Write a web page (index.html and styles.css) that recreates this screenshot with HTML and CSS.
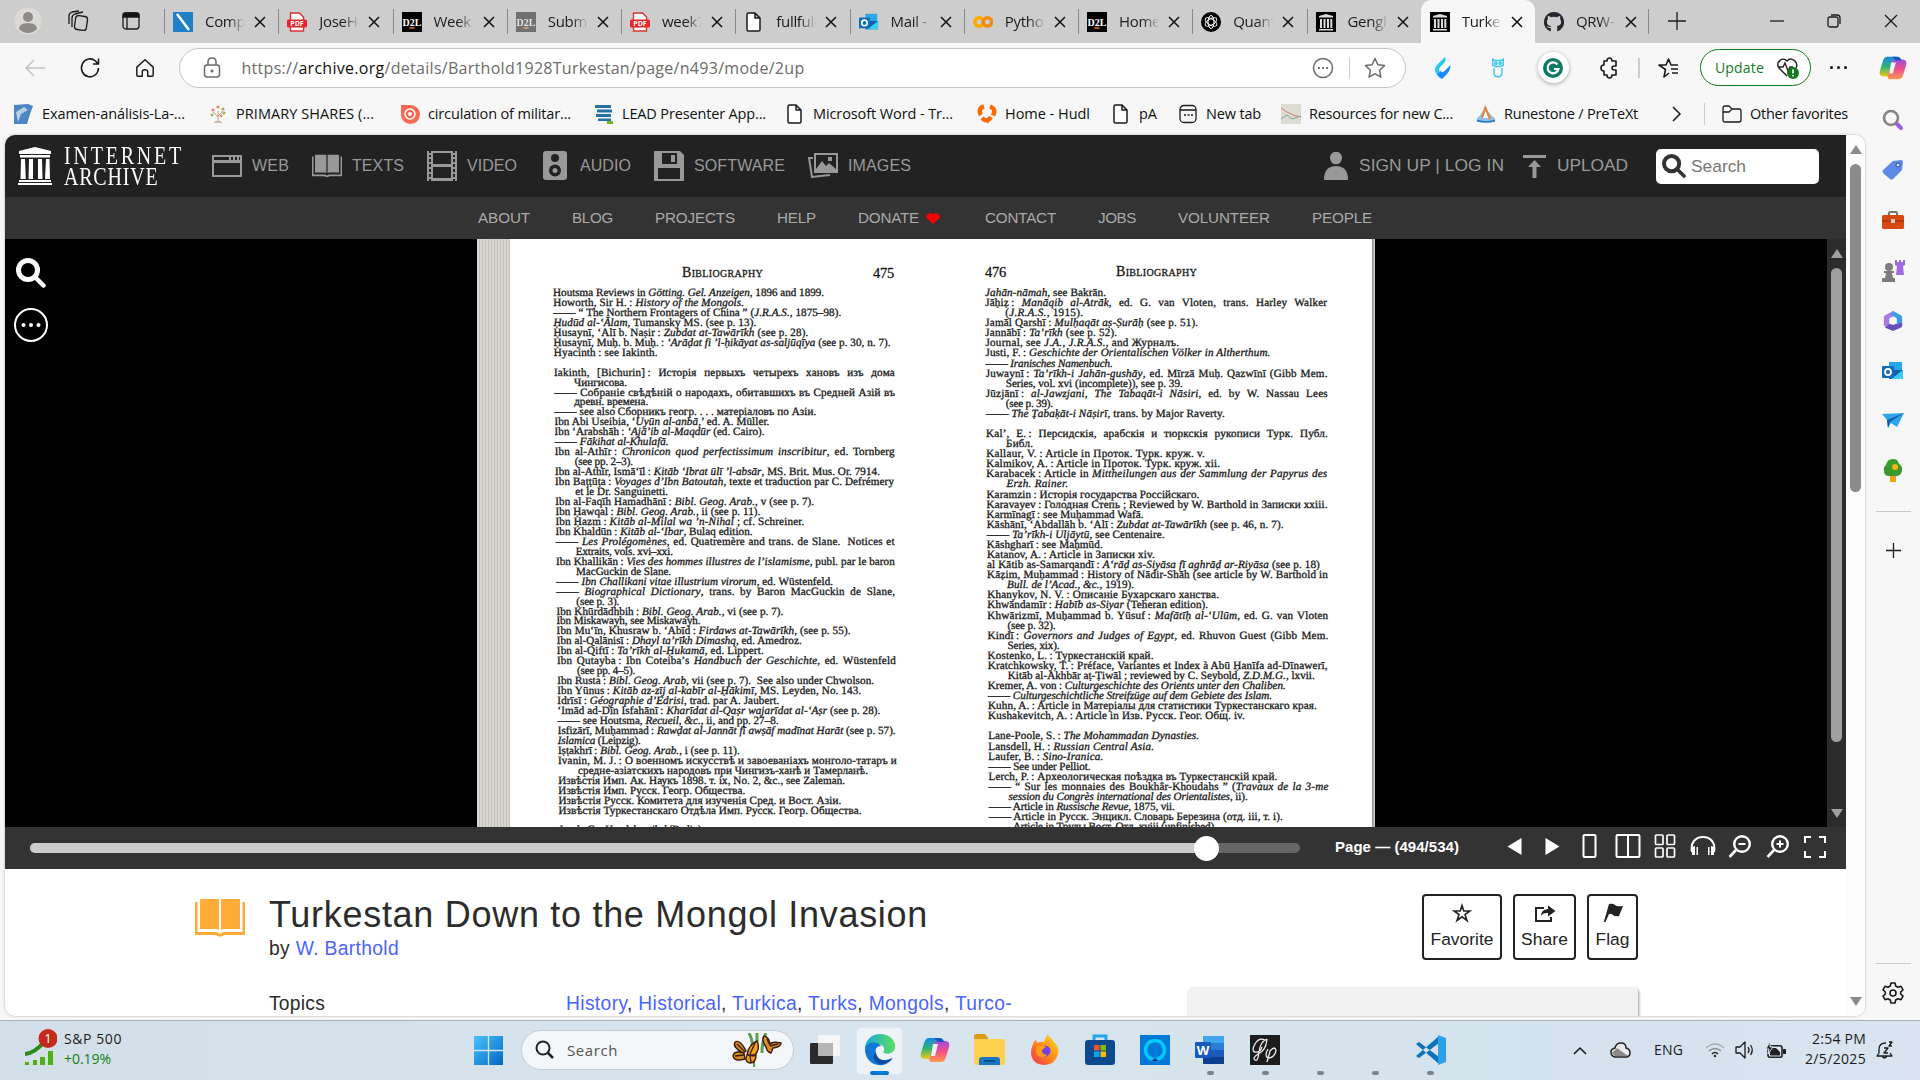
FILE: index.html
```html
<!DOCTYPE html>
<html lang="en">
<head>
<meta charset="utf-8">
<title>Turkestan Down to the Mongol Invasion : W. Barthold</title>
<link rel="stylesheet" href="styles.css">
</head>
<body>
<svg class="defs" width="0" height="0">
  <defs>
    <linearGradient id="gBlue" x1="0" y1="0" x2="1" y2="1"><stop offset="0" stop-color="#4cc2ff"/><stop offset="1" stop-color="#0067c0"/></linearGradient>
    <linearGradient id="gRain" x1="0" y1="0" x2="0" y2="1"><stop offset="0" stop-color="#1a86e8"/><stop offset=".5" stop-color="#2bb673"/><stop offset="1" stop-color="#f3c614"/></linearGradient>
    <linearGradient id="gPink" x1="0" y1="0" x2="0" y2="1"><stop offset="0" stop-color="#a44be0"/><stop offset=".5" stop-color="#ee4f86"/><stop offset="1" stop-color="#ff9a4d"/></linearGradient>
    <linearGradient id="gEdge" x1="0" y1="0" x2="1" y2="0"><stop offset="0" stop-color="#1ba6e0"/><stop offset="1" stop-color="#5be05c"/></linearGradient>
    <linearGradient id="gFox" x1="1" y1="0" x2="0" y2="1"><stop offset="0" stop-color="#ffe226"/><stop offset=".5" stop-color="#ff8a16"/><stop offset="1" stop-color="#f0305a"/></linearGradient>
  </defs>
  <symbol id="copilot" viewBox="0 0 30 30"><path fill="url(#gRain)" d="M9 3h9c2 0 3 1 2.500 3l-4 14c-1 3-2 4-5 4H5c-4 0-5-3-4-6L4 8c1-3 2-5 5-5z"/><path fill="url(#gPink)" d="M21 27h-9c-2 0-3-1-2.500-3l4-14c1-3 2-4 5-4H25c4 0 5 3 4 6l-3 10c-1 3-2 5-5 5z"/><path fill="#f3f4f6" d="M13 9h5l-3 12h-4z"/><path fill="#1956c8" d="M14 3h6c2 0 3 1 4 4h-6z"/></symbol>
  <symbol id="pdf" viewBox="0 0 20 20"><path fill="#fff" stroke="#d33" stroke-width="1.400" d="M3.500 1h9l4 4v14h-13z"/><rect x="0" y="7.500" width="20" height="8" rx="1.500" fill="#e5252a"/><text x="10" y="14" font-size="7" font-weight="bold" text-anchor="middle" fill="#fff">PDF</text></symbol>
  <symbol id="d2l" viewBox="0 0 20 20"><rect width="20" height="20"/><text x="10" y="14" font-family="Liberation Serif" font-size="10" font-weight="bold" text-anchor="middle" fill="#fff">D2L</text><rect x="7.500" y="15.200" width="5" height="1.500" fill="#e8731a"/></symbol>
  <symbol id="doc" viewBox="0 0 20 20"><path fill="#fff" stroke="#1b1b1b" stroke-width="1.500" stroke-linejoin="round" d="M4.500 1H11l5 5v11.500q0 1.500-1.500 1.500h-10Q3 19 3 17.500v-15Q3 1 4.500 1zM11 1v5h5"/></symbol>
  <symbol id="temple" viewBox="0 0 34 38"><path d="M17 0 33 4v3H1V4zM2 8h30v2.500H2zM3 12h4l.8 20H2.500zM11 12h4v20h-4.500zM20 12h4l.5 20H20zM28 12h3.500l.5 20h-5zM1 33h32v2H1zM0 36h34v2H0z"/></symbol>
  <symbol id="iaTab" viewBox="0 0 20 20"><rect width="20" height="20"/><path fill="#ddd" d="M10 2 17 4v1.500H3V4zM4 7h2v9H4zM7.500 7h2v9h-2zM11 7h2v9h-2zM14.300 7h2v9h-2zM3 17h14v1.500H3z"/></symbol>
  <symbol id="outlook" viewBox="0 0 22 20"><path fill="#28a8ea" d="M7 1h13v10H7z"/><path fill="#0f5ea8" d="M7 9h14v9H7z"/><path fill="#3ccbf4" d="M21 9v9H9z"/><rect y="5" width="12" height="12" rx="1" fill="#0f6cbd"/><circle cx="6" cy="11" r="3" fill="none" stroke="#fff" stroke-width="1.800"/></symbol>
  <symbol id="x" viewBox="0 0 12 12"><path stroke="#111" stroke-width="1.500" d="m1 1 10 10M11 1 1 11"/></symbol>
  <symbol id="book" viewBox="0 0 50 38"><path d="M6 0h17q1 0 1 1v30q-1-1-3-1H5V1q0-1 1-1zM27 0h17q1 0 1 1v29H29q-2 0-3 1V1q0-1 1-1z"/><path d="M0 3h2.500v30H21q2 0 4 2 2-2 4-2h18.500V3H50v33H30q-2 0-3 1.500h-4q-1-1.500-3-1.500H0z"/></symbol>
  <symbol id="lens" viewBox="0 0 30 30"><circle cx="12" cy="12" r="9.500" fill="none" stroke="currentColor" stroke-width="5"/><path d="m19 19 8.500 8.500" stroke="currentColor" stroke-width="4.500" stroke-linecap="round"/></symbol>
</svg>

<header class="tabstrip">
  <div class="strip-tools">
    <svg width="28" height="28" viewBox="0 0 28 28"><circle cx="14" cy="14" r="13.500" fill="#dcdad6"/><circle cx="14" cy="10" r="5" fill="#8d8a87"/><path fill="#8d8a87" d="M5 22q0-6 9-6t9 6q-4 4-9 4t-9-4z"/></svg>
    <svg width="22" height="22" viewBox="0 0 22 22" class="ln"><rect x="8" y="6" width="12" height="14" rx="3" transform="rotate(8 14 13)"/><path d="M5 17V8q0-3 3-4l8-2M2 14V6q0-3 3-4l7-1"/></svg>
    <svg width="20" height="20" viewBox="0 0 20 20" class="ln"><rect x="2" y="2" width="16" height="16" rx="3"/><path fill="#111" d="M2 6V4q0-2 2-2h12q2 0 2 2v2zM6 6v12"/></svg>
  </div>
  <div class="tab"><svg class="fav"><rect width="20" height="20" fill="#1d80c9"/><path d="M4 2l12 16" stroke="#fff" stroke-width="2.500"/></svg><span class="tt">Compu</span><svg class="cx"><use href="#x"/></svg></div>
  <div class="tab"><svg class="fav"><use href="#pdf"/></svg><span class="tt">JoseHe</span><svg class="cx"><use href="#x"/></svg></div>
  <div class="tab"><svg class="fav"><use href="#d2l"/></svg><span class="tt">Week</span><svg class="cx"><use href="#x"/></svg></div>
  <div class="tab"><svg class="fav dim"><use href="#d2l"/></svg><span class="tt">Submi</span><svg class="cx"><use href="#x"/></svg></div>
  <div class="tab"><svg class="fav"><use href="#pdf"/></svg><span class="tt">week7</span><svg class="cx"><use href="#x"/></svg></div>
  <div class="tab"><svg class="fav"><use href="#doc"/></svg><span class="tt">fullfull</span><svg class="cx"><use href="#x"/></svg></div>
  <div class="tab"><svg class="fav"><use href="#outlook"/></svg><span class="tt">Mail -</span><svg class="cx"><use href="#x"/></svg></div>
  <div class="tab"><svg class="fav" viewBox="0 0 20 20" fill="none" stroke-width="3.500"><circle cx="6" cy="10" r="4.200" stroke="#f9ab00"/><circle cx="14.500" cy="10" r="4.200" stroke="#f28b10"/></svg><span class="tt">Python</span><svg class="cx"><use href="#x"/></svg></div>
  <div class="tab"><svg class="fav"><use href="#d2l"/></svg><span class="tt">Home</span><svg class="cx"><use href="#x"/></svg></div>
  <div class="tab"><svg class="fav" viewBox="0 0 20 20"><circle cx="10" cy="10" r="10"/><g fill="none" stroke="#fff"><ellipse cx="10" cy="10" rx="3" ry="6.500"/><ellipse cx="10" cy="10" rx="3" ry="6.500" transform="rotate(60 10 10)"/><ellipse cx="10" cy="10" rx="3" ry="6.500" transform="rotate(120 10 10)"/></g></svg><span class="tt">Quant</span><svg class="cx"><use href="#x"/></svg></div>
  <div class="tab"><svg class="fav"><use href="#iaTab"/></svg><span class="tt">Gengh</span><svg class="cx"><use href="#x"/></svg></div>
  <div class="tab on"><svg class="fav"><use href="#iaTab"/></svg><span class="tt">Turkes</span><svg class="cx"><use href="#x"/></svg></div>
  <div class="tab nosep"><svg class="fav" viewBox="0 0 20 20"><path fill="#24292f" d="M10 0a10 10 0 0 0-3.200 19.500V16c-3 .6-3.500-1.500-4-2 2 0 2 1.500 4 1v-1C2.500 13.500 2 9 4 7c-.5-1-.3-2 0-3 1 0 2 .5 3 1.200q3-.8 6 0c1-.7 2-1.200 3-1.200.3 1 .5 2 0 3 2 2 1.500 6.500-2.800 7v5.500A10 10 0 0 0 10 0z"/></svg><span class="tt">QRW-</span><svg class="cx"><use href="#x"/></svg></div>
  <div class="newtab"><svg width="18" height="18" class="ln"><path d="M9 0v18M0 9h18"/></svg></div>
  <div class="winbtns">
    <svg width="14" height="14" class="ln"><path d="M0 7h14"/></svg>
    <svg width="14" height="14" class="ln"><rect x="1" y="3" width="10" height="10" rx="2"/><path d="M4 1h6q3 0 3 3v6"/></svg>
    <svg width="14" height="14" class="ln"><path d="m1 1 12 12M13 1 1 13"/></svg>
  </div>
</header>

<div class="shell">
<div class="main">
  <div class="toolbar">
    <div class="navbtn"><svg width="22" height="20" viewBox="0 0 22 20" class="ln pale"><path d="M21 10H2M10 2l-8 8 8 8"/></svg></div>
    <div class="navbtn"><svg width="22" height="22" viewBox="0 0 22 22" class="ln mid"><path d="M19.500 11a8.500 9 0 1 1-3-7l2.500 3M19.500 1.500V7H14"/></svg></div>
    <div class="navbtn"><svg width="20" height="22" viewBox="0 0 22 22" class="ln mid"><path d="M2 10 11 2l9 8v9q0 1-1 1h-5v-5q0-2-3-2t-3 2v5H3q-1 0-1-1z"/></svg></div>
    <div class="address">
      <svg width="18" height="22" viewBox="0 0 18 22" class="ln grey"><rect x="1.500" y="8" width="15" height="12" rx="2.500"/><path d="M5 8V5q0-4 4-4t4 4v3"/><circle cx="9" cy="14" r=".8"/></svg>
      <span class="url" data-w="563">https://<b>archive.org</b>/details/Barthold1928Turkestan/page/n493/mode/2up</span>
      <svg width="22" height="22" viewBox="0 0 22 22" class="ln grey"><circle cx="11" cy="11" r="9.500"/><path stroke-width="2" d="M6 11h1.800M10.100 11h1.800M14.200 11H16"/></svg>
      <i class="vr"></i>
      <svg width="22" height="22" viewBox="0 0 22 22" class="ln grey"><path d="m11 1.500 2.900 6.300 6.600.8-4.900 4.700 1.300 6.800L11 16.700l-5.900 3.400 1.300-6.800L1.500 8.600l6.600-.8z"/></svg>
    </div>
    <div class="ext"><svg width="18" height="22" viewBox="0 0 18 22"><path fill="#1b8cff" d="M16.500 8q0 5-3.500 9l-5 5q-4-2-5.500-5l5-4 2 2z"/><path fill="#25c8ef" d="M11 0q1.500 3-.5 5.500L6 10q-2 3 0 5l-3.500 2Q-1 12 3 8z"/><path fill="#fff" d="m6.500 14 7-6 .5 1-6 6.500z"/></svg></div>
    <div class="ext"><svg width="14" height="22" viewBox="0 0 16 22" fill="none" stroke="#38c5f0" stroke-width="1.600"><path d="M2 1l3 1.500h6L14 1v7q-3 2-6 1-3 1-6-1zM3.500 11v6q0 4 4.500 4t4.500-4v-6"/><circle cx="5.500" cy="5.500" r="1.300"/><circle cx="10.500" cy="5.500" r="1.300"/></svg></div>
    <div class="ext"><span class="gram"><svg width="20" height="20" viewBox="0 0 20 20"><circle cx="10" cy="10" r="10" fill="#0e7a66"/><path fill="none" stroke="#fff" stroke-width="2.200" d="M14.500 6.500a5.500 5.500 0 1 0 1 4.500H11"/></svg></span></div>
    <div class="ext"><svg width="20" height="22" viewBox="0 0 20 22" class="ln mid"><path d="M5 4h3q0-3 2.500-3T13 4h4v5h-1.500q-2.500 0-2.500 2t2.500 2H17v5h-4q0 3-2.500 3T8 18H5v-4q-3 0-3-3t3-3z"/></svg></div>
    <i class="vr thick"></i>
    <div class="ext"><svg width="22" height="22" viewBox="0 0 22 22" class="ln mid"><path d="m12 16-5 4 1.500-7.500L2 8h7l2.500-6L14 8h7M14 12h7M15 16h6"/></svg></div>
    <div class="update"><span data-w="49">Update</span><svg width="24" height="24" viewBox="0 0 24 24"><path fill="none" stroke="#222" stroke-width="1.400" d="M11 20 3 12C-1 6 7 0 11 5c4-5 12 1 9 7M2 11h5l2-4 3 8 2-4h3"/><circle cx="17" cy="17" r="6" fill="#15791f"/><path stroke="#fff" stroke-width="1.600" d="M17 13.500v4M17 19v1.500"/></svg></div>
    <div class="ext"><svg width="17" height="3"><g fill="#111"><circle cx="1.500" cy="1.500" r="1.500"/><circle cx="8.500" cy="1.500" r="1.500"/><circle cx="15.500" cy="1.500" r="1.500"/></g></svg></div>
  </div>

  <nav class="favs">
    <a><svg class="fi" viewBox="0 0 20 20"><path fill="#4c86c6" d="M0 1l14-1 5 2-3 8-3 10H0z"/><path fill="#b7d0e6" d="M2 8l8-5 4 3-7 4-3 8z"/></svg><span data-w="143">Examen-análisis-La-...</span></a>
    <a><svg class="fi" viewBox="0 0 20 20"><path stroke="#c09a75" fill="none" d="M10 18V7M10 13 5 8M10 12l5-5"/><g fill="#e0887c"><circle cx="5" cy="6" r="1.600"/><circle cx="10" cy="3" r="1.600"/><circle cx="13" cy="12" r="1.300"/></g><g fill="#9ab25a"><circle cx="15" cy="5" r="1.600"/><circle cx="4" cy="11" r="1.400"/><circle cx="16" cy="9" r="1.500"/></g><path fill="#cba" d="M6 18q4-3 8 0v1H6z"/></svg><span data-w="138">PRIMARY SHARES (...</span></a>
    <a><svg class="fi" viewBox="0 0 20 20"><path fill="#f96854" d="M1 1h9a9.500 9.500 0 1 1-9 9z"/><circle cx="10" cy="10" r="5" fill="none" stroke="#fff" stroke-width="1.500"/><circle cx="10" cy="10" r="2" fill="#fff"/></svg><span data-w="143">circulation of militar...</span></a>
    <a><svg class="fi" viewBox="0 0 20 20"><path fill="#2471a3" d="M1 1h16v3H1zM3 5.500h15v3H3zM2 10h15v3H2zM4 14.500h13v2.500H4z"/><path fill="#7ab51d" d="M13 17h6v3h-6z"/></svg><span data-w="144">LEAD Presenter App...</span></a>
    <a><svg class="fi"><use href="#doc"/></svg><span data-w="140">Microsoft Word - Tr...</span></a>
    <a><svg class="fi" viewBox="0 0 20 20"><path fill="none" stroke="#ff6a00" stroke-width="4.500" d="M7 2.500C2 4 2 8 4 11M13 2.500c5 2 5 5 3 9M5 14q5 5 9-1"/><path fill="#ff6a00" d="M8 14h5l-2 6z"/></svg><span data-w="85">Home - Hudl</span></a>
    <a><svg class="fi"><use href="#doc"/></svg><span data-w="18">pA</span></a>
    <a><svg class="fi ln" viewBox="0 0 20 20"><rect x="2" y="1.500" width="16" height="17" rx="4"/><path d="M2 6h16M6 11h2M9.500 11h2M13 11h2"/></svg><span data-w="55">New tab</span></a>
    <a><svg class="fi" viewBox="0 0 20 20"><rect width="20" height="20" fill="#dcdcd2"/><path fill="none" stroke="#d77" d="M0 4l6 4 6 3 8 2"/><path fill="none" stroke="#7aa89a" d="M0 15l6-4 5 4 9-3"/></svg><span data-w="144">Resources for new C...</span></a>
    <a><svg class="fi" viewBox="0 0 20 20"><path fill="#8ec1ea" d="M1 14q5-3 8-13 4 10 10 13v4H1z"/><path fill="#fff" d="M6 14 9.500 5 13 14z"/><path fill="none" stroke="#f08030" stroke-width="2" d="M6 14 9.500 4 14 15"/><path fill="none" stroke="#1e78c8" stroke-width="1.500" d="M1 16.500q9 3 18 0"/></svg><span data-w="134">Runestone / PreTeXt</span></a>
    <div class="more"><svg width="9" height="16" class="ln mid"><path d="m1 1 7 7-7 7"/></svg></div>
    <i class="vr"></i>
    <a class="other"><svg class="fi ln" viewBox="0 0 20 20"><path d="M1 4q0-2 2-2h4l3 3h7q2 0 2 2v9q0 2-2 2H3q-2 0-2-2zM1 8h6l3-3"/></svg><span data-w="98">Other favorites</span></a>
  </nav>

  <div class="page">
    <div class="doc">
      <div class="ia-top">
        <svg class="logo" width="34" height="38"><use href="#temple"/></svg>
        <div class="wordmark"><span data-w="150">INTERNET</span><span data-w="118">ARCHIVE</span></div>
        <a><svg width="30" height="30" viewBox="0 0 30 30"><path fill-rule="evenodd" d="M0 4h30v22H0zM2 6v3h15V6zM19 6v3h2V6zM23 6v3h2V6zM27 6v3h1V6zM2 12v12h26V12z"/></svg><span data-w="37">WEB</span></a>
        <a><svg width="30" height="30" viewBox="0 -4 50 46"><use href="#book" width="50" height="38"/></svg><span data-w="52">TEXTS</span></a>
        <a><svg width="30" height="30" viewBox="0 0 30 30"><path fill-rule="evenodd" d="M0 0h2v2h2V0h22v2h2V0h2v30h-2v-2h-2v2H4v-2H2v2H0zM2 4v2h2V4zM2 8v3h2V8zM2 13v3h2v-3zM2 18v3h2v-3zM2 23v3h2v-3zM26 4v2h2V4zM26 8v3h2V8zM26 13v3h2v-3zM26 18v3h2v-3zM26 23v3h2v-3zM6 2v11h18V2zM6 16v11h18V16z"/></svg><span data-w="50">VIDEO</span></a>
        <a><svg width="30" height="30" viewBox="0 0 30 30"><rect x="3" y="0" width="24" height="29" rx="3"/><g fill="#222"><circle cx="15" cy="7" r="4"/><circle cx="15" cy="19.500" r="6"/></g><circle cx="15" cy="19.500" r="2.500"/></svg><span data-w="51">AUDIO</span></a>
        <a><svg width="30" height="30" viewBox="0 0 30 30"><path fill-rule="evenodd" d="M0 0h26l4 4v26H0zM8 2v11h15V2zM17 4h4v7h-4zM4 17v11h22V17z"/></svg><span data-w="91">SOFTWARE</span></a>
        <a><svg width="30" height="30" viewBox="0 0 30 30"><path fill-rule="evenodd" d="M6 2h24v20H6zM8 4v14l6-8 4 5 3-3 7 6V4zM20 6h4v4h-4z"/><path fill="none" stroke="#999" stroke-width="2" d="M5 7H1l3 19 18-2"/></svg><span data-w="63">IMAGES</span></a>
        <div class="ia-right">
          <svg width="24" height="28" viewBox="0 0 24 28"><ellipse cx="12" cy="6" rx="6" ry="6.300"/><path d="M0 28q0-14 12-14t12 14z"/></svg><span data-w="145">SIGN UP | LOG IN</span>
          <svg class="upl" width="23" height="23" viewBox="0 0 23 23"><path d="M0 0h23v3H0zM11.500 5 18 12h-4.500v11h-4V12H5z"/></svg><span data-w="71">UPLOAD</span>
          <div class="search"><svg width="24" height="24"><use href="#lens"/></svg><span data-w="55">Search</span></div>
        </div>
      </div>
      <div class="ia-sub">
        <a data-w="52">ABOUT</a><a data-w="41">BLOG</a><a data-w="80">PROJECTS</a><a data-w="39">HELP</a><span class="donate"><a data-w="61">DONATE</a><svg width="14" height="11" viewBox="0 0 14 11"><path fill="red" d="M7 11 1 5.500C-1.500 2 3.500-2 7 1.500 10.500-2 15.500 2 13 5.500z"/></svg></span><a data-w="71">CONTACT</a><a data-w="38">JOBS</a><a data-w="92">VOLUNTEER</a><a data-w="60">PEOPLE</a>
      </div>
      <div class="reader">
        <div class="rtools">
          <svg width="30" height="30"><use href="#lens"/></svg>
          <svg width="34" height="34" viewBox="0 0 34 34"><circle cx="17" cy="17" r="16" fill="none" stroke="#fff" stroke-width="2"/><g fill="#fff"><circle cx="9.500" cy="17" r="2"/><circle cx="17" cy="17" r="2"/><circle cx="24.500" cy="17" r="2"/></g></svg>
        </div>
        <div class="edge"></div>
        <div class="spread">
          <section class="leaf left">
            <div class="head"><span class="sc" data-w="81">Bibliography</span><span class="pn" data-w="21">475</span></div>
            <div class="lines">
              <p data-w="271">Houtsma Reviews in <i>Götting. Gel. Anzeigen</i>, 1896 and 1899.</p>
              <p data-w="191">Howorth, Sir H. : <i>History of the Mongols.</i></p>
              <p data-w="288">—— “ The Northern Frontagers of China ” (<i>J.R.A.S.</i>, 1875–98).</p>
              <p data-w="203"><i>Ḥudūd al-‘Ālam</i>, Tumansky MS. (see p. 13).</p>
              <p data-w="255">Ḥusaynī, ‘Alī b. Naṣir : <i>Zubdat at-Tawārīkh</i> (see p. 28).</p>
              <p data-w="337">Ḥusaynī, Muḥ. b. Muḥ. : <i>‘Arāḍat fi ’l-ḥikāyat as-saljūqīya</i> (see p. 30, n. 7).</p>
              <p data-w="104">Hyacinth : see Iakinth.</p>
              <p>&nbsp;</p>
              <p class="j" data-w="341">Iakinth, [Bichurin] : Исторія первыхъ четырехъ хановъ изъ дома</p>
              <p class="in" data-w="53">Чингисова.</p>
              <p class="j" data-w="341">—— Собраніе свѣдѣній о народахъ, обитавшихъ въ Средней Азій въ</p>
              <p class="in" data-w="74">древн. времена.</p>
              <p data-w="262">—— see also Сборникъ геогр. . . . матеріаловъ по Азіи.</p>
              <p data-w="215">Ibn Abi Useibia, ‘<i>Uyūn al-anbā</i>,’ ed. A. Müller.</p>
              <p data-w="210">Ibn ‘Arabshāh : <i>‘Ajā’ib al-Maqdūr</i> (ed. Cairo).</p>
              <p data-w="114">—— <i>Fākihat al-Khulafā.</i></p>
              <p class="j" data-w="340">Ibn al-Athīr : <i>Chronicon quod perfectissimum inscribitur</i>, ed. Tornberg</p>
              <p class="in" data-w="58">(see pp. 2–3).</p>
              <p data-w="325">Ibn al-Athīr, Ismā‘īl : <i>Kitāb ‘Ibrat ūlī ’l-absār</i>, MS. Brit. Mus. Or. 7914.</p>
              <p class="j" data-w="339">Ibn Baṭṭūṭa : <i>Voyages d’Ibn Batoutah</i>, texte et traduction par C. Defrémery</p>
              <p class="in" data-w="93">et le Dr. Sanguinetti.</p>
              <p data-w="259">Ibn al-Faqīh Hamadhānī : <i>Bibl. Geog. Arab.</i>, v (see p. 7).</p>
              <p data-w="205">Ibn Ḥawqal : <i>Bibl. Geog. Arab.</i>, ii (see p. 11).</p>
              <p data-w="249">Ibn Ḥazm : <i>Kitāb al-Milal wa ’n-Nihal</i> ; cf. Schreiner.</p>
              <p data-w="197">Ibn Khaldūn : <i>Kitāb al-‘Ibar</i>, Bulaq edition.</p>
              <p class="j" data-w="339">—— <i>Les Prolégomènes</i>, ed. Quatremère and trans. de Slane. &nbsp;Notices et</p>
              <p class="in" data-w="97">Extraits, vols. xvi–xxi.</p>
              <p class="j" data-w="339">Ibn Khallikān : <i>Vies des hommes illustres de l’islamisme</i>, publ. par le baron</p>
              <p class="in" data-w="95">MacGuckin de Slane.</p>
              <p data-w="277">—— <i>Ibn Challikani vitae illustrium virorum</i>, ed. Wüstenfeld.</p>
              <p class="j" data-w="339">—— <i>Biographical Dictionary</i>, trans. by Baron MacGuckin de Slane,</p>
              <p class="in" data-w="43">(see p. 3).</p>
              <p data-w="227">Ibn Khūrdādhbih : <i>Bibl. Geog. Arab.</i>, vi (see p. 7).</p>
              <p data-w="144">Ibn Miskawayh, see Miskawayh.</p>
              <p data-w="294">Ibn Mu‘īn, Khusraw b. ‘Abīd : <i>Firdaws at-Tawārīkh</i>, (see p. 55).</p>
              <p data-w="245">Ibn al-Qalānisī : <i>Dhayl ta’rīkh Dimashq</i>, ed. Amedroz.</p>
              <p data-w="207">Ibn al-Qiftī : <i>Ta’rīkh al-Ḥukamā</i>, ed. Lippert.</p>
              <p class="j" data-w="339">Ibn Qutayba : Ibn Coteiba’s <i>Handbuch der Geschichte</i>, ed. Wüstenfeld</p>
              <p class="in" data-w="58">(see pp. 4–5).</p>
              <p data-w="317">Ibn Rusta : <i>Bibl. Geog. Arab</i>, vii (see p. 7). &nbsp;See also under Chwolson.</p>
              <p data-w="304">Ibn Yūnus : <i>Kitāb az-zīj al-kabīr al-Ḥākimī</i>, MS. Leyden, No. 143.</p>
              <p data-w="222">Idrīsī : <i>Géographie d’Edrisi</i>, trad. par A. Jaubert.</p>
              <p data-w="323">‘Imād ad-Dīn Isfahānī : <i>Kharīdat al-Qaṣr wajarīdat al-‘Aṣr</i> (see p. 28).</p>
              <p data-w="221">—— see Houtsma, <i>Recueil</i>, <i>&amp;c.</i>, ii, and pp. 27–8.</p>
              <p data-w="338">Isfizārī, Muḥammad : <i>Rawḍat al-Jannāt fī awṣāf madīnat Harāt</i> (see p. 57).</p>
              <p data-w="83"><i>Islamica</i> (Leipzig).</p>
              <p data-w="182">Iṣṭakhrī : <i>Bibl. Geog. Arab.</i>, i (see p. 11).</p>
              <p class="j" data-w="339">Ivanin, M. J. : О военномъ искусствѣ и завоеваніахъ монголо-татаръ и</p>
              <p class="in" data-w="290">средне-азіатскихъ народовъ при Чингизъ-ханѣ и Тамерланѣ.</p>
              <p data-w="287">Извѣстія Имп. Ак. Наукъ 1898. т. ix, No. 2, &amp;c., see Zaleman.</p>
              <p data-w="187">Извѣстія Имп. Русск. Геогр. Общества.</p>
              <p data-w="283">Извѣстія Русск. Комитета для изученія Сред. и Вост. Азіи.</p>
              <p data-w="303">Извѣстія Туркестанскаго Отдѣла Имп. Русск. Геогр. Общества.</p>
              <p>&nbsp;</p>
              <p data-w="145">Jacob, G. : <i>Handelsartikel</i> (Berlin).</p>
            </div>
          </section>
          <section class="leaf right">
            <div class="head"><span class="pn" data-w="21">476</span><span class="sc" data-w="81">Bibliography</span></div>
            <div class="lines">
              <p data-w="121"><i>Jahān-nāmah</i>, see Bakrān.</p>
              <p class="j" data-w="342">Jāḥiẓ : <i>Manāqib al-Atrāk</i>, ed. G. van Vloten, trans. Harley Walker</p>
              <p class="in" data-w="78">(<i>J.R.A.S.</i>, 1915).</p>
              <p data-w="213">Jamāl Qarshī : <i>Mulḥaqāt aṣ-Ṣurāḥ</i> (see p. 51).</p>
              <p data-w="132">Jannābī : <i>Ta’rīkh</i> (see p. 52).</p>
              <p data-w="194">Journal, see <i>J.A.</i>, <i>J.R.A.S.</i>, and Журналъ.</p>
              <p data-w="285">Justi, F. : <i>Geschichte der Orientalischen Völker in Altherthum.</i></p>
              <p data-w="127">—— <i>Iranisches Namenbuch.</i></p>
              <p class="j" data-w="342">Juwaynī : <i>Ta’rīkh-i Jahān-gushāy</i>, ed. Mīrzā Muḥ. Qazwīnī (Gibb Mem.</p>
              <p class="in" data-w="177">Series, vol. xvi (incomplete)), see p. 39.</p>
              <p class="j" data-w="342">Jūzjānī : <i>al-Jawzjani, The Tabaqāt-i Nāsiri</i>, ed. by W. Nassau Lees</p>
              <p class="in" data-w="47">(see p. 39).</p>
              <p data-w="239">—— <i>The Ṭabaḳāt-i Nāṣirī</i>, trans. by Major Raverty.</p>
              <p>&nbsp;</p>
              <p class="j" data-w="342">Kal’, E. : Персидскія, арабскія и тюркскія рукописи Турк. Публ.</p>
              <p class="in" data-w="27">Библ.</p>
              <p data-w="219">Kallaur, V. : Article in Проток. Турк. круж. v.</p>
              <p data-w="234">Kalmikov, A. : Article in Проток. Турк. круж. xii.</p>
              <p class="j" data-w="341">Karabacek : Article in <i>Mittheilungen aus der Sammlung der Papyrus des</i></p>
              <p class="in" data-w="62"><i>Erzh. Rainer.</i></p>
              <p data-w="213">Karamzin : Исторія государства Россійскаго.</p>
              <p data-w="341">Karavayev : Голодная Степь ; Reviewed by W. Barthold in Записки xxiii.</p>
              <p data-w="157">Karmīnagī : see Muḥammad Wafā.</p>
              <p data-w="297">Kāshānī, ‘Abdallāh b. ‘Alī : <i>Zubdat at-Tawārīkh</i> (see p. 46, n. 7).</p>
              <p data-w="178">—— <i>Ta’rīkh-i Uljāytū</i>, see Centenaire.</p>
              <p data-w="116">Kāshgharī : see Maḥmūd.</p>
              <p data-w="168">Katanov, A. : Article in Записки xiv.</p>
              <p data-w="333">al Kātib as-Samarqandī : <i>A‘rāḍ as-Siyāsa fī aghrāḍ ar-Riyāsa</i> (see p. 18)</p>
              <p class="j" data-w="341">Kāẓim, Muḥammad : History of Nādir-Shāh (see article by W. Barthold in</p>
              <p class="in" data-w="127"><i>Bull. de l’Acad.</i>, <i>&amp;c.</i>, 1919).</p>
              <p data-w="232">Khanykov, N. V. : Описаніе Бухарскаго ханства.</p>
              <p data-w="221">Khwāndamīr : <i>Habīb as-Siyar</i> (Teheran edition).</p>
              <p class="j" data-w="341">Khwārizmī, Muḥammad b. Yūsuf : <i>Mafātīḥ al-‘Ulūm</i>, ed. G. van Vloten</p>
              <p class="in" data-w="48">(see p. 32).</p>
              <p class="j" data-w="341">Kindī : <i>Governors and Judges of Egypt</i>, ed. Rhuvon Guest (Gibb Mem.</p>
              <p class="in" data-w="52">Series, xix).</p>
              <p data-w="166">Kostenko, L. : Туркестанскій край.</p>
              <p class="j" data-w="340">Kratchkowsky, T. : Préface, Variantes et Index à Abū Ḥanīfa ad-Dīnawerī,</p>
              <p class="in" data-w="307">Kitāb al-Akhbār aṭ-Ṭiwāl ; reviewed by C. Seybold, <i>Z.D.M.G.</i>, lxvii.</p>
              <p data-w="298">Kremer, A. von : <i>Culturgeschichte des Orients unter den Chaliben.</i></p>
              <p data-w="284">—— <i>Culturgeschichtliche Streifzüge auf dem Gebiete des Islam.</i></p>
              <p data-w="329">Kuhn, A. : Article in Матеріалы для статистики Туркестанскаго края.</p>
              <p data-w="257">Kushakevitch, A. : Article in Изв. Русск. Геог. Общ. iv.</p>
              <p>&nbsp;</p>
              <p data-w="211">Lane-Poole, S. : <i>The Mohammadan Dynasties.</i></p>
              <p data-w="166">Lansdell, H. : <i>Russian Central Asia.</i></p>
              <p data-w="115">Laufer, B. : <i>Sino-Iranica.</i></p>
              <p data-w="102">—— See under Pelliot.</p>
              <p data-w="289">Lerch, P. : Археологическая поѣздка въ Туркестанскій край.</p>
              <p class="j" data-w="340">—— “ Sur les monnaies des Boukhâr-Khoudahs ” (<i>Travaux de la 3-me</i></p>
              <p class="in" data-w="239"><i>session du Congrès international des Orientalistes</i>, ii).</p>
              <p data-w="186">—— Article in <i>Russische Revue</i>, 1875, vii.</p>
              <p data-w="294">—— Article in Русск. Энцикл. Словарь Березина (отд. iii, т. i).</p>
              <p data-w="228">—— Article in Труды Вост. Отд. xviii (unfinished).</p>
            </div>
          </section>
        </div>
        <div class="redge"></div>
        <div class="rscroll"><svg width="12" height="9"><path d="M6 0l6 9H0z"/></svg><i></i><svg width="12" height="9"><path d="M6 9l6-9H0z"/></svg></div>
      </div>
      <div class="bnav">
        <div class="slider"><i></i><b></b></div>
        <strong data-w="124">Page — (494/534)</strong>
        <div class="bicons">
          <svg viewBox="0 0 26 26"><path fill="#fff" d="M19.500 5v17L5.500 13.500z"/></svg>
          <svg viewBox="0 0 26 26"><path fill="#fff" d="M5.500 5v17l14-8.500z"/></svg>
          <svg viewBox="0 0 26 26"><rect x="6.500" y="2" width="12" height="22" rx="1"/></svg>
          <svg viewBox="0 0 26 26"><rect x="1.500" y="2" width="23" height="22" rx="1"/><path d="M13 2v22"/></svg>
          <svg viewBox="0 0 26 26"><g stroke-width="1.700"><rect x="3.500" y="2" width="7.500" height="9.500" rx="1"/><rect x="15" y="2" width="7.500" height="9.500" rx="1"/><rect x="3.500" y="15" width="7.500" height="9" rx="1"/><rect x="15" y="15" width="7.500" height="9" rx="1"/></g></svg>
          <svg viewBox="0 0 26 26"><path d="M2 19C0 9 6 4 13 4s13 5 11 15"/><path fill="#fff" stroke="none" d="M2 14l3-1v9H2zM6.500 14H8v8H6.500zM24 14l-3-1v9h3zM19.500 14H18v8h1.500z"/></svg>
          <svg viewBox="0 0 26 26"><circle cx="15" cy="11" r="7.800" stroke-width="2.400"/><path d="m9 17-6.500 7" stroke-width="2.600"/><path d="M11.500 11h7"/></svg>
          <svg viewBox="0 0 26 26"><circle cx="15" cy="11" r="7.800" stroke-width="2.400"/><path d="m9 17-6.500 7" stroke-width="2.600"/><path d="M11.500 11h7M15 7.500v7"/></svg>
          <svg viewBox="0 0 26 26"><path d="M3 10V4h6M17 4h6v6M23 18v6h-6M9 24H3v-6"/></svg>
        </div>
      </div>
      <div class="detail">
        <svg class="bigbook" width="50" height="38" fill="#ffab37"><use href="#book"/></svg>
        <div class="info">
          <h1 data-w="659">Turkestan Down to the Mongol Invasion</h1>
          <div class="by" data-w="130">by <a>W. Barthold</a></div>
          <div class="meta"><span class="k" data-w="56">Topics</span><span data-w="446"><a>History</a>, <a>Historical</a>, <a>Turkica</a>, <a>Turks</a>, <a>Mongols</a>, <a>Turco-</a></span></div>
        </div>
        <div class="side">
          <div class="btns">
            <button class="b1"><svg width="20" height="20" viewBox="0 0 20 20"><path fill="none" stroke="#222" stroke-width="1.600" d="m10 2.500 1.800 5.500h6l-4.800 3.500 2 6-5-3.700-5 3.700 2-6L2.200 8h6z"/></svg><span data-w="63">Favorite</span></button>
            <button class="b2"><svg width="22" height="20" viewBox="0 0 22 20"><path fill="none" stroke="#222" stroke-width="2" d="M10 5H2v13h15v-4"/><path fill="#222" d="M14 2.500 21.500 8 14 13.500V10q-5-.5-7 3Q7 6.500 14 6z"/></svg><span data-w="47">Share</span></button>
            <button class="b3"><svg width="20" height="20" viewBox="0 0 20 20"><path fill="#222" d="M6 1q4-1 6 1t8 1l-4 10q-4 1-6-1-2-2-4-1L2.500 19H.8z"/></svg><span data-w="34">Flag</span></button>
          </div>
          <div class="box"></div>
        </div>
      </div>
    </div>
    <div class="pscroll"><svg width="12" height="9"><path d="M6 0l6 9H0z"/></svg><i></i><svg width="12" height="9"><path d="M6 9l6-9H0z"/></svg></div>
  </div>
</div>

<aside class="rail">
  <div><svg width="28" height="28"><use href="#copilot"/></svg></div>
  <div><svg width="22" height="22" viewBox="0 0 22 22"><circle cx="9" cy="9" r="7" fill="none" stroke="#858585" stroke-width="2.600"/><path stroke="#9a62d8" stroke-width="4" stroke-linecap="round" d="m15 15 4 4"/></svg></div>
  <div><svg width="22" height="22" viewBox="0 0 22 22"><path fill="#5c8ae6" d="M11 2l8-1q2 0 2 2l-1 8-9 9q-2 1-3 0l-7-6q-1-2 0-3z"/><circle cx="16" cy="6" r="2" fill="#dce8ff" stroke="#234a9c"/></svg></div>
  <div><svg width="24" height="20" viewBox="0 0 24 20"><path fill="none" stroke="#777" stroke-width="2" d="M8 6V3q0-1 1-1h6q1 0 1 1v3"/><rect x="1" y="5" width="22" height="14" rx="1.500" fill="#d9480f"/><path fill="#b23a0a" d="M1 10h22v2H1z"/><rect x="10" y="9" width="4" height="4" fill="#ccc"/></svg></div>
  <div><svg width="24" height="24" viewBox="0 0 24 24"><path fill="#a06be0" d="M14 1h2v2h2V1h2v2h2V1h2v5l-2 1 1 9h-8l1-9-2-1z"/><g fill="#7c7c7c"><circle cx="8" cy="8" r="4"/><path d="M3 12h10v2h-2l1 5h2v4H1v-4h3l1-5H3z"/></g></svg></div>
  <div><svg width="22" height="22" viewBox="0 0 22 24"><path fill="#a77be0" d="M11 1 2 6q-1 1-1 2v9l6 3V9l9-4z"/><path fill="#3a9be8" d="M11 1l9 5q1 1 1 2v9l-6-3V9L9 5z"/><path fill="#6a4fc0" d="M21 14v3q0 1-1 2l-9 4-9-4 7-5 5 1z"/><circle cx="11" cy="12" r="4" fill="#f7f7f7"/></svg></div>
  <div><svg width="22" height="20"><use href="#outlook"/></svg></div>
  <div><svg width="22" height="18" viewBox="0 0 22 18"><path fill="#2ea5ee" d="M0 2 22 1 15 15l-6-4-3 5-1-8z"/><path fill="#0d5fa8" d="M5 8 22 1 8 10l-2 6z"/></svg></div>
  <div><svg width="20" height="24" viewBox="0 0 20 24"><path fill="#f0a30a" d="M7 15h6v8H7z"/><path fill="#3b9a2b" d="M10 0q5 0 6 5 4 2 3 7-1 5-6 5H6q-5 0-5-5Q0 8 3 6 4 0 10 0z"/><circle cx="12" cy="8" r="3" fill="#f3b414"/></svg></div>
  <i></i>
  <div class="add"><svg width="15" height="15" class="ln"><path d="M7.500 0v15M0 7.500h15"/></svg></div>
  <span class="grow"></span>
  <i></i>
  <div class="gear"><svg width="22" height="22" viewBox="0 0 22 22" class="ln mid"><path d="M9 1h4l.7 3 2.300 1.300 3-1 2 3.500-2.300 2.200v2l2.300 2.200-2 3.500-3-1-2.300 1.300-.7 3H9l-.7-3L6 16.700l-3 1-2-3.500L3.300 12v-2L1 7.800l2-3.500 3 1L8.300 4z"/><circle cx="11" cy="11" r="3"/></svg></div>
</aside>
</div>

<footer class="taskbar">
  <div class="widget">
    <svg width="32" height="36" viewBox="0 0 32 36"><g fill="#4fae14"><path d="M0 33h4v3H0zM8 31h4v5H8zM15 28h5v8h-5zM23 22h5v14h-5z"/></g><path fill="none" stroke="#2a8a1c" stroke-width="4" d="M0 25q10-1 19-12"/><circle cx="23" cy="9.500" r="9.500" fill="#c42b1c"/><text x="23" y="14" font-size="13" fill="#fff" text-anchor="middle">1</text></svg>
    <div><span data-w="58">S&amp;P 500</span><span class="gain" data-w="47">+0.19%</span></div>
  </div>
  <div class="apps">
    <svg width="29" height="29" viewBox="0 0 30 30" fill="url(#gBlue)"><path d="M0 0h14.300v14.300H0zM15.700 0H30v14.300H15.700zM0 15.700h14.300V30H0zM15.700 15.700H30V30H15.700z"/></svg>
    <div class="tsearch"><svg width="20" height="20" viewBox="0 0 20 20"><circle cx="8" cy="8" r="6.500" fill="none" stroke="#222" stroke-width="2"/><path stroke="#222" stroke-width="2.500" d="m13 13 5 5"/></svg><span data-w="51">Search</span>
      <svg width="50" height="34" viewBox="0 0 50 34"><path fill="none" stroke="#5d9e54" stroke-width="3" d="M17 0q4 8 3 12M34 0q-4 8-4 20M25 0v10"/><path fill="none" stroke="#5d9e54" stroke-width="2" d="M22 26v8"/><g fill="#d98a22" stroke="#3a1d10" stroke-width="1.400"><path d="M14 18Q8 6 3 9q-3 5 8 11zM12 20Q2 17 1 23q1 6 12 3z"/><path fill="#f5a01c" d="M15 22q2-11 10-14 4 8-3 15zM15 22q-3 7 3 8 6 0 6-8z"/><path d="M34 14q-5-7-2-11 5 1 6 8 2-3 11-1 0 4-8 5l-2 5q-4-1-5-6z"/><path fill="none" d="M5 11l8 8M3 23l9-1M23 10l-5 11M18 23l1 6M35 6l3 6M46 11l-8 2"/></g></svg></div>
    <div class="app"><svg width="30" height="30" viewBox="0 0 30 30"><rect y="8" width="23" height="21" rx="1" fill="#2a2a2a"/><rect x="8" width="22" height="21" rx="1" fill="#f6f6f6"/><rect x="8" y="8" width="15" height="13" fill="#b5b5b5"/></svg></div>
    <div class="app sel"><svg width="32" height="32" viewBox="0 0 32 32"><path fill="url(#gEdge)" d="M1 15C1 6 8 0 16 0c10 0 16 7 15 13 0 6-7 8-11 6-2-1 1-2 0-5-1-4-9-6-15 0z"/><path fill="#1377d4" d="M1 15C3 7 14 7 17 12c-5 0-6 4-5 8 2 6 8 8 16 4-3 6-9 8-14 7C5 30 1 22 1 15z"/><path fill="#0c4fa0" d="M12 18c0 8 9 11 17 6-5 7-15 8-18 3-2-3-2-6 1-9z"/></svg><u></u></div>
    <div class="app"><svg width="30" height="30"><use href="#copilot"/></svg></div>
    <div class="app"><svg width="31" height="32" viewBox="0 0 31 32"><path fill="#dc9a16" d="M0 2q0-2 2-2h9l3 4v8H0z"/><path fill="#ffd04d" d="M0 5h29q2 0 2 2v22q0 2-2 2H2q-2 0-2-2z"/><path fill="#1976c5" d="M5 31v-5q0-3 3-3h15q3 0 3 3v5z"/><path fill="#0b4f8c" d="M10 26h11v2H10z"/></svg></div>
    <div class="app"><svg width="30" height="32" viewBox="0 0 30 30"><path fill="url(#gFox)" d="M3 9q1-3 3-4l1 3q4-2 7-1l3-7q4 2 6 6 7 6 5 13-2 10-13 11Q3 30 1 19q0-6 2-10z"/><circle cx="15" cy="16" r="5.500" fill="#7542e5"/><path fill="#ff9a1e" d="M7 11q6-2 9 1l-4 3q-1 4 5 5-5 4-10 0-2-4 0-9z"/></svg></div>
    <div class="app"><svg width="30" height="32" viewBox="0 0 30 32"><path fill="none" stroke="#22a7e8" stroke-width="3" d="M9 8V2h12v6"/><rect y="6" width="30" height="25" rx="3" fill="#0b4a8f"/><path fill="#f35325" d="M9 11h5.500v5.500H9z"/><path fill="#81bc06" d="M15.500 11H21v5.500h-5.500z"/><path fill="#05a6f0" d="M9 17.500h5.500V23H9z"/><path fill="#ffba08" d="M15.500 17.500H21V23h-5.500z"/></svg></div>
    <div class="app"><svg width="30" height="30" viewBox="0 0 30 30"><rect width="30" height="30" fill="#0078d7"/><circle cx="15" cy="15" r="9.500" fill="none" stroke="#00caff" stroke-width="3.500"/><path stroke="#0078d7" stroke-width="1.500" d="M12 26l3-3 3 3"/></svg></div>
    <div class="app run"><svg width="30" height="30" viewBox="0 0 30 30"><path fill="#41a5ee" d="M8 1h21v8H8z"/><path fill="#2b7cd3" d="M8 8h21v7H8z"/><path fill="#185abd" d="M8 15h21v7H8z"/><path fill="#103f91" d="M8 22h21v7H8z"/><rect y="7" width="16" height="16" rx="1" fill="#185abd"/><text x="8" y="20" font-size="13" font-weight="bold" text-anchor="middle" fill="#fff">W</text></svg><u></u></div>
    <div class="app run"><svg width="30" height="30" viewBox="0 0 30 30"><rect width="30" height="30" fill="#1c1c1c"/><g fill="none" stroke="#eee" stroke-width="1.300"><path d="M15 5Q9 2 5 9T5 17q5 1 7-5M17 4q-7 3-8 13t-4 8q-3-2 3-6 8-3 9-15M18 14q-4 7 0 9 6 0 8-7-1-6-6 0l-3 11"/></g></svg><u></u></div>
    <div class="app run"><u></u></div>
    <div class="app run"><u></u></div>
    <div class="app run"><svg width="30" height="30" viewBox="0 0 30 30"><path fill="#0d72b9" d="M0 9l3-2 20 15v7zM0 21l3 2L23 8V1z"/><path fill="#2ca0ea" d="M22 0l8 3v24l-8 3z"/></svg><u></u></div>
  </div>
  <div class="tray">
    <svg width="14" height="9" class="ln mid"><path d="m1 8 6-6 6 6"/></svg>
    <svg width="21" height="16" viewBox="0 0 21 16"><path fill="#ececec" stroke="#222" stroke-width="1.500" d="M5 15q-4-1-4-5 0-3 4-4 1-5 6-5t5 5q4 1 4 5 0 3-3 4z"/><path fill="#8a8a8a" d="M2 11l5-5 11 8H5z"/></svg>
    <span class="eng" data-w="29">ENG</span>
    <svg width="20" height="16" viewBox="0 0 20 16" fill="none" stroke-width="1.600"><path stroke="#a9b0b5" d="M1 6q9-8 18 0"/><path stroke="#8a9095" d="M4 9q6-5 12 0"/><path stroke="#222" d="M7 12q3-3 6 0"/><circle cx="10" cy="14" r="1.200" fill="#222"/></svg>
    <svg width="20" height="18" viewBox="0 0 20 18" class="ln"><path d="M1 6h4l5-5v16l-5-5H1zM13 6q2 3 0 6"/><path d="M15.500 4q3.500 5 0 10"/></svg>
    <svg width="21" height="18" viewBox="0 0 21 18"><rect x="3" y="4.800" width="14" height="11.500" rx="2" fill="none" stroke="#222" stroke-width="1.600"/><path fill="#222" d="M18 8h3v5h-3zM5 7h6l4 4v3.500H5z"/><path fill="#222" stroke="#d6e2ea" d="M5 0 1 8h3l-1 5 5-7H5z"/></svg>
    <div class="clock"><span data-w="54">2:54 PM</span><span data-w="61">2/5/2025</span></div>
    <svg width="18" height="20" viewBox="0 0 18 20" class="ln"><path d="M10 3Q3 3 3 9v4l-2 3h15l-2-3M6 16q2 4 5 0M8 8h4l-4 5h4M13 2h3l-3 4h3"/></svg>
  </div>
</footer>
<script src="fit.js"></script>
</body>
</html>
```
FILE: styles.css
```css
* { box-sizing: border-box; }
body { margin: 0; width: 1920px; height: 1080px; overflow: hidden; background: #f7f7f7; color: #1b1b1b; font: 15px/20px "Open Sans", "Noto Sans", sans-serif; }
svg { flex: none; display: block; }
.defs { position: absolute; }
[data-w] { white-space: nowrap; flex: none; display: block; }
.ln { fill: none; stroke: #1b1b1b; stroke-width: 1.3; stroke-linejoin: round; }
.ln.mid { stroke-width: 1.6; }
.ln.pale { stroke: #c4c4c4; stroke-width: 1.6; }
.ln.grey { stroke: #6b6b6b; stroke-width: 1.5; }
.vr { width: 1px; height: 22px; background: #ccc; flex: none; }
.vr.thick { width: 2px; height: 20px; margin: 0 1px; }

.tabstrip { display: flex; height: 43px; background: #cdcdcd; align-items: center; padding-bottom: 0; }
.strip-tools { width: 164px; flex: none; display: flex; align-items: center; padding: 0 0 2px 14px; gap: 25px; }
.strip-tools svg:last-child { margin-left: 7px; }
.tab { width: 114.250px; height: 43px; flex: none; display: flex; align-items: center; padding-left: 9px; background: linear-gradient(#888, #888) 0 50% / 1px 25px no-repeat; }
.fav { width: 20px; height: 20px; }
.fav.dim { opacity: .45; }
.tt { width: 40px; margin: 0 9px 2px 12px; overflow: hidden; white-space: nowrap; letter-spacing: -.3px; -webkit-mask-image: linear-gradient(90deg, #000 60%, transparent); mask-image: linear-gradient(90deg, #000 60%, transparent); }
.cx { width: 12px; height: 12px; }
.tab.on { background: #f7f7f7; border-radius: 10px 10px 0 0; }
.tab.nosep { background: linear-gradient(#888, #888) 100% 50% / 1px 25px no-repeat; }
.newtab { width: 55px; padding: 0 0 2px 19px; flex: none; }
.winbtns { flex: 1; display: flex; justify-content: flex-end; gap: 43px; padding: 0 22px 1px 0; }

.shell { display: flex; height: 977px; }
.main { width: 1866px; flex: none; }
.toolbar { display: flex; align-items: center; height: 49px; padding-left: 7px; }
.navbtn { width: 55.300px; display: flex; justify-content: center; flex: none; }
.address { width: 1227px; height: 40px; margin-left: 6.600px; border: 1px solid #c6c6c6; border-radius: 20px; background: #fff; display: flex; align-items: center; padding: 0 19px 0 23px; flex: none; }
.url { margin: 0 auto 0 20px; font-size: 16px; color: #6b6b6b; }
.url b { font-weight: normal; color: #111; }
.address .vr { margin: 0 14px 0 15px; }
.ext { width: 55.400px; display: flex; justify-content: center; flex: none; }
.address + .ext { margin-left: 8.500px; }
.gram { width: 31px; height: 31px; border-radius: 50%; background: #fff; box-shadow: 0 1px 4px #0005; display: grid; place-items: center; }
.update { width: 111px; height: 37px; border: 1.5px solid #15791f; border-radius: 19px; background: #fff; display: flex; align-items: center; justify-content: space-between; padding: 0 10px 0 14px; color: #15791f; flex: none; margin-left: 4px; font-size: 14px; }

.favs { display: flex; align-items: center; height: 43px; padding: 0 0 0 14px; font-size: 14.500px; color: #111; }
.favs a { display: flex; align-items: center; gap: 8px; margin-right: 23px; flex: none; }
.favs a:nth-child(2) { margin-right: 26px; }
.favs a:nth-child(4) { margin-right: 19px; }
.favs a:nth-child(5) { margin-right: 24px; }
.favs a:nth-child(6), .favs a:nth-child(7) { margin-right: 21px; }
.favs a:nth-child(8) { margin-right: 20px; }
.fi { width: 20px; height: 20px; }
.more { margin-left: 11px; width: 32px; }
.favs .other { margin: 0 0 0 17px; }

.page { display: flex; width: 1860px; height: 881px; margin-left: 5px; border-radius: 10px; overflow: hidden; background: #fff; box-shadow: 0 0 3px #0004; }
.doc { width: 1841px; flex: none; font-family: "Liberation Sans", Arial, sans-serif; }
.ia-top { height: 62px; background: #222; display: flex; align-items: center; padding-left: 13px; color: #999; fill: #999; font-size: 16px; }
.logo { fill: #fff; }
.wordmark { width: 120px; margin: 0 28px 0 12px; color: #fff; font: 25px/21px "Liberation Serif", serif; }
.wordmark span { transform: scaleX(.8); transform-origin: 0 0; }
.ia-top a { display: flex; align-items: center; gap: 10px; margin-right: 23px; }
.ia-right { display: flex; align-items: center; margin-left: auto; padding-right: 27px; font-size: 17.400px; }
.ia-right > span { margin: 0 1px 2px 11px; }
.ia-right .upl { margin-left: 18px; }
.search { display: flex; align-items: center; gap: 5px; width: 163px; height: 35px; margin-left: 27px; padding-left: 6px; background: #fff; border-radius: 5px; color: #333; }
.search span { color: #777; padding-bottom: 1px; }
.ia-sub { height: 42px; background: #333; display: flex; align-items: center; gap: 42px; padding-left: 473px; font-size: 15.200px; color: #aaa; }
.donate { display: flex; align-items: center; gap: 7px; margin-right: 3px; }

.reader { height: 588px; background: #000; display: flex; overflow: hidden; }
.rtools { width: 472px; flex: none; padding: 19px 0 0 9px; color: #fff; }
.rtools svg:first-child { margin: 0 0 20px 2px; }
.edge { width: 33px; flex: none; background: repeating-linear-gradient(90deg, #dad6d2 0 2px, #c4c0bc 2px 3px); }
.spread { width: 862px; flex: none; background: #fff; display: flex; height: 588px; overflow: hidden; }
.redge { width: 3px; flex: none; background: linear-gradient(90deg, #888, #ddd8d2); }
.leaf { font: 11.200px/9.960px "Liberation Serif", "Times New Roman", serif; color: #111; -webkit-text-stroke: .3px #222; }
.leaf.left { width: 437px; padding: 27px 0 0 43px; }
.leaf.right { padding: 25.500px 0 0 38px; line-height: 10.080px; }
.head { display: flex; height: 22px; line-height: 14px; width: 341px; }
.left .sc { margin: 0 auto 0 129px; }
.right .sc { margin-left: 110px; }
.sc { font-variant: small-caps; font-size: 14px; }
.pn { font-size: 14.500px; }
.lines { transform-origin: 0 0; transform: skewX(.6deg); }
.right .lines { transform: skewX(.4deg); }
.leaf p { margin: 0; white-space: nowrap; height: 1lh; }
.leaf p.in { margin-left: 20px; }
.rscroll, .pscroll { display: flex; flex-direction: column; align-items: center; fill: #9f9f9f; }
.rscroll { width: 19px; margin-left: auto; background: #2c2c2c; padding: 10px 0 9px; justify-content: space-between; }
.rscroll i { width: 11px; height: 474px; border-radius: 6px; background: #9f9f9f; margin: 10px 0 auto; }
.pscroll { width: 19px; background: #fcfcfc; padding: 10px 0 10px; fill: #8b8b8b; }
.pscroll i { width: 11px; height: 328px; border-radius: 6px; background: #8b8b8b; margin: 10px 0 auto; }

.bnav { height: 42px; background: #333; display: flex; align-items: center; padding-left: 25px; color: #fff; font-size: 15px; }
.slider { position: relative; width: 1270px; height: 10px; border-radius: 5px; background: #666; flex: none; }
.slider i { display: block; width: 1176px; height: 10px; border-radius: 5px; background: #ccc; }
.slider b { position: absolute; left: 1164px; top: -7px; width: 25px; height: 25px; border-radius: 50%; background: #fff; }
.bnav strong { margin: 0 0 2px 35px; }
.bicons { display: flex; gap: 11.500px; margin-left: 43px; }
.bicons svg { width: 26px; height: 26px; fill: none; stroke: #fff; stroke-width: 2; margin-top: -4px; }
.bicons svg:nth-child(-n+2) { stroke: none; }

.detail { display: flex; padding-left: 190px; color: #2c2c2c; height: 147px; overflow: hidden; }
.detail a { color: #4b64ff; }
.bigbook { margin-top: 30px; }
.info { width: 919px; margin-left: 24px; padding-top: 24px; font-size: 19.300px; }
h1 { margin: 0; font-size: 36px; font-weight: normal; line-height: 43px; }
.by { line-height: 26px; }
.meta { display: flex; margin-top: 30px; line-height: 24px; }
.meta .k { margin-right: 241px; }
.side { width: 450px; padding-top: 25px; }
.btns { display: flex; justify-content: flex-end; gap: 11px; }
button { height: 66px; padding: 7px 0 0; border: 2px solid #222; border-radius: 4px; background: #fff; color: #222; font: 17.400px/20px "Liberation Sans", Arial, sans-serif; display: flex; flex-direction: column; align-items: center; gap: 6px; }
.b1 { width: 80px; } .b2 { width: 63px; } .b3 { width: 51px; }
.box { height: 60px; margin-top: 28px; background: #f1f1f1; border-radius: 4px; box-shadow: 1px 1px 3px #0006; }

.rail { width: 54px; display: flex; flex-direction: column; align-items: center; }
.rail div { height: 50px; display: grid; place-items: center; flex: none; }
.rail div:nth-child(2) { margin-top: 2px; }
.rail div:nth-child(5) { margin-top: 1px; }
.rail i { width: 35px; height: 1px; background: #c9c9c9; margin-top: 15px; flex: none; }
.rail .add { margin-top: 13px; }
.grow { flex: 1; }
.rail .gear { height: 56px; padding-top: 1px; }

.taskbar { height: 60px; display: flex; align-items: center; background: linear-gradient(90deg, #d3dfe8, #d8e5ee 45%, #d4e2ed 80%, #d9e4f0); border-top: 1px solid #aab2b8; position: relative; font-size: 14px; }
.widget { display: flex; align-items: center; width: 474px; padding-left: 25px; gap: 7px; line-height: 20px; flex: none; }
.widget svg { margin-top: -7px; }
.widget div { margin-top: -3px; }
.gain { color: #128012; }
.apps { display: flex; align-items: center; flex: none; margin-top: -1px; }
.tsearch { width: 273px; height: 40px; margin: 0 3px 0 18px; padding: 0 11px 0 13px; border: 1px solid #c3cdd5; border-radius: 20px; background: #f3f7fa; display: flex; align-items: center; gap: 12px; color: #555; font-size: 15px; }
.tsearch svg:last-child { margin-left: auto; }
.app { width: 55.100px; height: 59px; display: grid; place-items: center; position: relative; }
.app.sel::before { content: ""; position: absolute; inset: 6px 4px 5px; border-radius: 5px; background: #edf3f8; border: 1px solid #e0e8ee; }
.app svg { position: relative; }
.app u { position: absolute; bottom: 5px; left: 24px; width: 7px; height: 4px; border-radius: 2px; background: #7b838a; }
.app.sel u { left: 18px; width: 19px; background: #0078d4; bottom: 5px; }
.tray { display: flex; align-items: center; position: absolute; right: 26px; top: 0; height: 58px; }
.tray svg { margin-right: 10px; }
.tray svg:first-child { margin-right: 23px; }
.eng { margin: 0 22px 0 13px; }
.clock { width: 70px; display: flex; flex-direction: column; align-items: flex-end; line-height: 20.500px; margin: -2px 10px 0 0; }
.tray svg:last-child { margin: 0; }
```
FILE: fit.js
```js
// Old-style punctuation: a fixed thin space before colons, so it does not
// stretch when a book line is justified.
document.querySelectorAll(".leaf p").forEach(function (p) {
  p.childNodes.forEach(function (n) {
    if (n.nodeType === 3) n.nodeValue = n.nodeValue.replace(/ :/g, "\u2009:");
  });
});

// Sets each label to its column width by spreading the difference over letters,
// or over word gaps where a book line is justified.
document.querySelectorAll("[data-w]").forEach(function (el) {
  var w = parseFloat(el.dataset.w);
  var text = el.textContent;
  el.style.width = "max-content";
  var natural = parseFloat(getComputedStyle(el).width);
  var gaps = text.split(/[ \u00a0]/).length - 1;
  if (el.classList.contains("j") && natural < w && gaps) {
    var tracking = Math.min(0.15, (w - natural) / text.length);
    el.style.letterSpacing = tracking + "px";
    el.style.wordSpacing = (w - natural - tracking * text.length) / gaps + "px";
  } else {
    el.style.letterSpacing = (w - natural) / text.length + "px";
  }
  el.style.width = w + "px";
});
```
